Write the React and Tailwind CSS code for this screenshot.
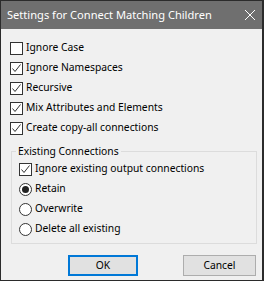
import React from 'react';

const Check = ({ checked }) => (
  <span className="w-[13px] h-[13px] border border-[#333] bg-white flex items-center justify-center shrink-0">
    {checked && (
      <svg width="11" height="11" viewBox="0 0 11 11">
        <path d="M1.5 5.5 L4 8.5 L9.5 1.5" fill="none" stroke="#333" strokeWidth="1" />
      </svg>
    )}
  </span>
);

const Radio = ({ checked }) => (
  <svg width="13" height="13" viewBox="0 0 13 13" className="shrink-0">
    <circle cx="6.5" cy="6.5" r="6" fill="white" stroke="#333" strokeWidth="1" />
    {checked && <circle cx="6.5" cy="6.5" r="3.5" fill="#222" />}
  </svg>
);

const Row = ({ children, label }) => (
  <div className="flex items-center gap-[3px] h-[20px]">
    {children}
    <span>{label}</span>
  </div>
);

export default function App() {
  const options = [
    { label: 'Ignore Case', checked: false },
    { label: 'Ignore Namespaces', checked: true },
    { label: 'Recursive', checked: true },
    { label: 'Mix Attributes and Elements', checked: true },
    { label: 'Create copy-all connections', checked: true },
  ];

  return (
    <div
      className="w-[264px] h-[281px] flex flex-col bg-[#f0f0f0] border border-r-2 border-[#2b2b2b] text-[10.3px] text-black"
      style={{ fontFamily: '"Noto Sans", "Open Sans", sans-serif' }}
    >
      {/* title bar */}
      <div className="h-[28px] bg-[#6f6f6f] flex items-center justify-between pl-[6px] pr-[6px] text-white text-[11.1px] shrink-0">
        <span>Settings for Connect Matching Children</span>
        <svg width="12" height="12" viewBox="0 0 12 12">
          <path d="M1 1 L11 11 M11 1 L1 11" stroke="white" strokeWidth="1" />
        </svg>
      </div>

      <div className="flex flex-col pl-[9px] pr-[4px] pt-[9px]">
        {options.map((o) => (
          <Row key={o.label} label={o.label}>
            <Check checked={o.checked} />
          </Row>
        ))}

        <fieldset className="mt-[5px] ml-[1px] mr-[1px] border border-[#dcdcdc] pl-[7px] pb-[4px]">
          <legend className="ml-[-3px] px-[2px] leading-[16px]">Existing Connections</legend>
          <Row label="Ignore existing output connections">
            <Check checked />
          </Row>
          <Row label="Retain">
            <Radio checked />
          </Row>
          <Row label="Overwrite">
            <Radio />
          </Row>
          <Row label="Delete all existing">
            <Radio />
          </Row>
        </fieldset>

        <div className="flex justify-end gap-[45px] mt-[11px] pr-[2px]">
          <button className="w-[70px] h-[21px] bg-[#e1e1e1] border-2 border-[#0078d7]">OK</button>
          <button className="w-[73px] h-[21px] bg-[#e1e1e1] border border-[#adadad]">Cancel</button>
        </div>
      </div>
    </div>
  );
}
